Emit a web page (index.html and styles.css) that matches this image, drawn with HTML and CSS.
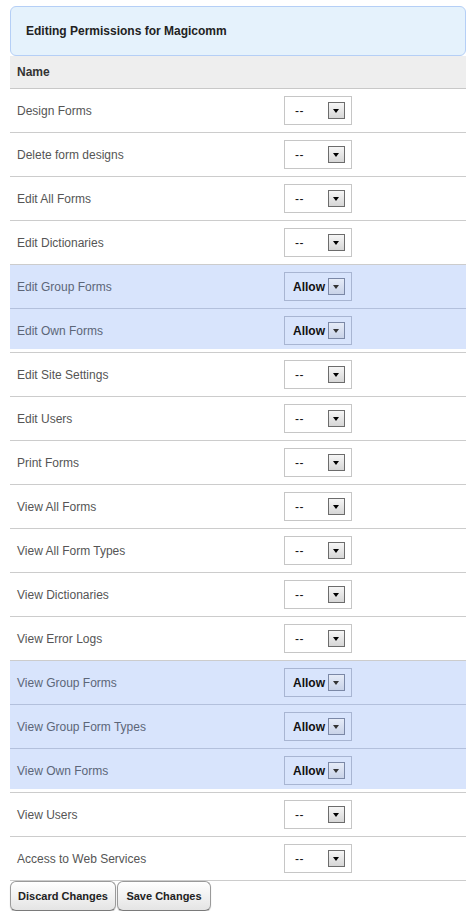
FILE: index.html
```html
<!DOCTYPE html>
<html>
<head>
<meta charset="utf-8">
<title>Editing Permissions</title>
<link rel="stylesheet" href="styles.css">
</head>
<body>
<div class="page">
  <div class="title-box">Editing Permissions for Magicomm</div>
  <div class="perm-table">
    <div class="head-row">Name</div>

    <div class="row"><span class="name">Design Forms</span><span class="sel"><span class="val">--</span><span class="btn"></span></span></div>
    <div class="row"><span class="name">Delete form designs</span><span class="sel"><span class="val">--</span><span class="btn"></span></span></div>
    <div class="row"><span class="name">Edit All Forms</span><span class="sel"><span class="val">--</span><span class="btn"></span></span></div>
    <div class="row"><span class="name">Edit Dictionaries</span><span class="sel"><span class="val">--</span><span class="btn"></span></span></div>
    <div class="row hl"><span class="name">Edit Group Forms</span><span class="sel allow"><span class="val">Allow</span><span class="btn"></span></span></div>
    <div class="row hl last"><span class="name">Edit Own Forms</span><span class="sel allow"><span class="val">Allow</span><span class="btn"></span></span></div>
    <div class="row"><span class="name">Edit Site Settings</span><span class="sel"><span class="val">--</span><span class="btn"></span></span></div>
    <div class="row"><span class="name">Edit Users</span><span class="sel"><span class="val">--</span><span class="btn"></span></span></div>
    <div class="row"><span class="name">Print Forms</span><span class="sel"><span class="val">--</span><span class="btn"></span></span></div>
    <div class="row"><span class="name">View All Forms</span><span class="sel"><span class="val">--</span><span class="btn"></span></span></div>
    <div class="row"><span class="name">View All Form Types</span><span class="sel"><span class="val">--</span><span class="btn"></span></span></div>
    <div class="row"><span class="name">View Dictionaries</span><span class="sel"><span class="val">--</span><span class="btn"></span></span></div>
    <div class="row"><span class="name">View Error Logs</span><span class="sel"><span class="val">--</span><span class="btn"></span></span></div>
    <div class="row hl"><span class="name">View Group Forms</span><span class="sel allow"><span class="val">Allow</span><span class="btn"></span></span></div>
    <div class="row hl"><span class="name">View Group Form Types</span><span class="sel allow"><span class="val">Allow</span><span class="btn"></span></span></div>
    <div class="row hl last"><span class="name">View Own Forms</span><span class="sel allow"><span class="val">Allow</span><span class="btn"></span></span></div>
    <div class="row"><span class="name">View Users</span><span class="sel"><span class="val">--</span><span class="btn"></span></span></div>
    <div class="row"><span class="name">Access to Web Services</span><span class="sel"><span class="val">--</span><span class="btn"></span></span></div>
  </div>
  <div class="actions">
    <button class="action discard">Discard Changes</button>
    <button class="action save">Save Changes</button>
  </div>
</div>
</body>
</html>
```

FILE: styles.css
```css
html, body {
  margin: 0;
  padding: 0;
  background: #fff;
}
body {
  font-family: "Liberation Sans", Arial, sans-serif;
  font-size: 12px;
  color: #555;
}
.page {
  width: 456px;
  padding: 6px 0 0 10px;
}
.title-box {
  box-sizing: border-box;
  height: 50px;
  border: 1px solid #b5cff6;
  border-radius: 6px;
  background: #e5f2fc;
  padding-left: 15px;
  display: flex;
  align-items: center;
  font-weight: bold;
  color: #222;
}
.perm-table {
  display: flex;
  flex-direction: column;
}
.head-row {
  height: 32px;
  background: #eeeeee;
  border-bottom: 1px solid #c8c8c8;
  display: flex;
  align-items: center;
  padding-left: 7px;
  font-weight: bold;
  color: #333;
}
.row {
  height: 43px;
  border-bottom: 1px solid #cccccc;
  display: grid;
  grid-template-columns: 267px 1fr;
  align-items: center;
  padding-left: 7px;
}
.row .name {
  padding-top: 1px;
}
.row.hl {
  background: #d8e4fc;
  border-bottom-color: #b3c0dc;
  color: #5c6678;
}
.row.hl.last {
  background: linear-gradient(#d8e4fc 40px, #ffffff 40px);
  border-bottom-color: #cccccc;
}
.sel {
  box-sizing: border-box;
  width: 68px;
  height: 29px;
  border: 1px solid #c6c6c6;
  display: flex;
  align-items: center;
  justify-content: space-between;
  padding: 0 6px 0 10px;
}
.sel .val {
  color: #111;
  letter-spacing: 0.5px;
}
.sel .btn {
  box-sizing: border-box;
  width: 17px;
  height: 17px;
  border: 1px solid #6c6c6c;
  background: linear-gradient(#f6f6f6, #d6d6d6);
  position: relative;
}
.sel .btn::after {
  content: "";
  position: absolute;
  left: 4px;
  top: 6px;
  border-left: 3.5px solid transparent;
  border-right: 3.5px solid transparent;
  border-top: 4px solid #000;
}
.sel.allow {
  border-color: #a8b5d2;
  padding-left: 8px;
}
.sel.allow .val {
  font-weight: bold;
  letter-spacing: 0;
  color: #111;
}
.sel.allow .btn {
  border-color: #7b88a6;
  background: linear-gradient(#e6ecf8, #c9d3e8);
}
.sel.allow .btn::after {
  border-top-color: #333;
}
.actions {
  display: flex;
  gap: 1px;
}
.action {
  font-family: "Liberation Sans", Arial, sans-serif;
  font-size: 11px;
  font-weight: bold;
  color: #222;
  height: 30px;
  border: 1px solid #9a9a9a;
  border-bottom-color: #7a7a7a;
  border-radius: 6px;
  background: linear-gradient(#ffffff, #e4e4e4);
  box-shadow: 0 1px 1px rgba(0,0,0,0.25);
  padding: 0;
}
.action.discard {
  width: 106px;
}
.action.save {
  width: 94px;
}
```
